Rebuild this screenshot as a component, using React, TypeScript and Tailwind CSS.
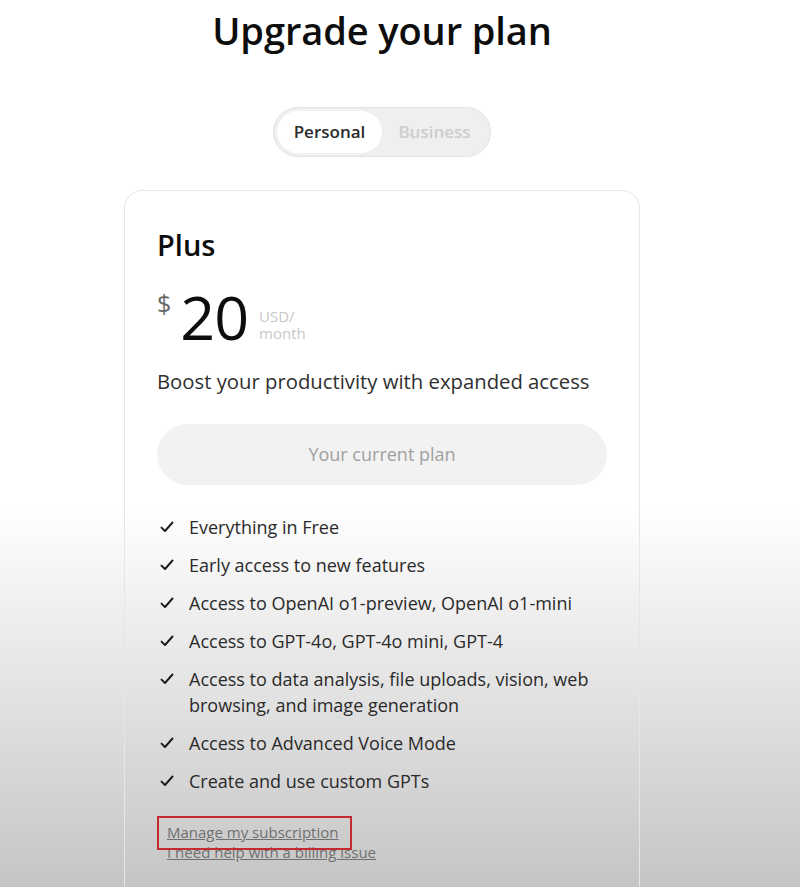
import React from "react";

const features: string[][] = [
  ["Everything in Free"],
  ["Early access to new features"],
  ["Access to OpenAI o1-preview, OpenAI o1-mini"],
  ["Access to GPT-4o, GPT-4o mini, GPT-4"],
  ["Access to data analysis, file uploads, vision, web", "browsing, and image generation"],
  ["Access to Advanced Voice Mode"],
  ["Create and use custom GPTs"],
];

function CheckIcon() {
  return (
    <svg width="16" height="16" viewBox="0 0 16 16" fill="none" className="shrink-0">
      <path d="M2.5 8.6 L6 12 L13.5 3.5" stroke="#1a1a1a" strokeWidth="1.9" strokeLinecap="round" strokeLinejoin="round" />
    </svg>
  );
}

export default function App() {
  return (
    <div
      className="relative h-[887px] w-full overflow-hidden bg-[linear-gradient(to_bottom,#ffffff_0%,#ffffff_57%,#c5c5c5_100%)]"
      style={{ fontFamily: '"Open Sans", "Noto Sans", sans-serif' }}
    >
      <div className="flex w-[764px] flex-col items-center">
        <h1 className="mt-[5px] text-[38px] font-semibold leading-[50px] tracking-[-0.1px] text-[#0d0d0d]">
          Upgrade your plan
        </h1>
        <div className="mt-[52px] flex h-[50px] w-[218px] items-center rounded-full border border-[#e2e2e2] bg-[#efefef] p-[3px]">
          <div className="flex h-[42px] w-[105px] items-center justify-center rounded-full bg-white text-[17px] font-semibold text-[#2a2a2a]">
            Personal
          </div>
          <div className="flex h-[42px] flex-1 items-center justify-center text-[17px] font-semibold text-[#cdcdcd]">
            Business
          </div>
        </div>
        <div className="mt-[33px] h-[760px] w-[516px] rounded-[18px] border border-[#e6e6e6] px-[32px] pt-[36px]">
          <div className="text-[29px] font-semibold leading-[36px] text-[#0d0d0d]">Plus</div>
          <div className="mt-[26px] flex h-[56px] items-start">
            <span className="-mt-[1px] text-[25px] leading-[30px] text-[#666666]">$</span>
            <span className="ml-[9px] text-[61px] font-normal leading-[56px] tracking-[-1px] text-[#0d0d0d]">20</span>
            <div className="ml-[11px] mt-[19px] flex flex-col text-[15px] leading-[17px] text-[#c8c8c8]">
              <span>USD/</span>
              <span>month</span>
            </div>
          </div>
          <p className="mt-[22px] text-[20.3px] leading-[28px] text-[#2f2f2f]">
            Boost your productivity with expanded access
          </p>
          <div className="mt-[29px] flex h-[61px] w-[450px] items-center justify-center rounded-full bg-[#f2f2f2] text-[18px] text-[#a0a0a0]">
            Your current plan
          </div>
          <ul className="mt-[29px] flex flex-col gap-[12px]">
            {features.map((lines, i) => (
              <li key={i} className="flex items-start gap-[14px] pl-[2px]">
                <div className="mt-[5px]">
                  <CheckIcon />
                </div>
                <div className="text-[18px] leading-[26px] text-[#2a2a2a]">
                  {lines.map((l, j) => (
                    <div key={j}>{l}</div>
                  ))}
                </div>
              </li>
            ))}
          </ul>
          <div className="relative mt-[28px] flex flex-col pl-[10px] text-[15px] leading-[20px] text-[#707070]">
            <span className="underline">Manage my subscription</span>
            <span className="underline">I need help with a billing issue</span>
            <div className="pointer-events-none absolute left-0 top-[-6px] h-[34px] w-[195px] border-2 border-[#c42a2f]" />
          </div>
        </div>
      </div>
    </div>
  );
}
